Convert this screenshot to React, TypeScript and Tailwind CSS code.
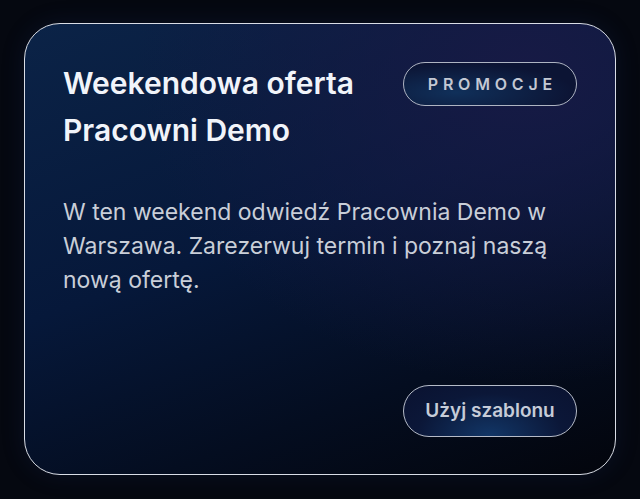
export default function App() {
  return (
    <div
      className="flex min-h-screen w-full items-start bg-[#050810] px-6 pt-[23px]"
      style={{ fontFamily: 'Inter, "Noto Sans", sans-serif' }}
    >
      <div className="flex h-[452px] w-full flex-col rounded-[36px] border-[1.5px] border-[#d9dde6] bg-[radial-gradient(ellipse_at_85%_10%,#171a45_0%,transparent_55%),linear-gradient(160deg,#0b2347_0%,#06183a_45%,#040d20_75%,#03050c_100%)] px-[38px] pb-[37px] pt-[36px] shadow-[0_0_24px_rgba(40,70,140,0.15)]">
        <div className="flex items-start justify-between gap-6">
          <h1 className="text-[30px] font-semibold leading-[47px] text-[#f1f4fa]">
            Weekendowa oferta
            <br />
            Pracowni Demo
          </h1>
          <span className="mt-[2px] flex h-[44px] w-[174px] shrink-0 items-center justify-center rounded-full border-[1.5px] border-[#aeb4c2] bg-[radial-gradient(ellipse_at_30%_70%,#10305a_0%,#0c1434_70%)] pl-[0.3em] text-[16px] font-semibold tracking-[0.3em] text-[#c3c8d3]">
            PROMOCJE
          </span>
        </div>
        <p className="mt-[41px] text-[23px] leading-[34px] text-[#c9ced8]">
          W ten weekend odwiedź Pracownia Demo w Warszawa. Zarezerwuj termin i poznaj naszą nową ofertę.
        </p>
        <div className="mt-auto flex justify-end">
          <button className="flex h-[52px] w-[174px] items-center justify-center rounded-full border-[1.5px] border-[#b5bbc8] bg-[radial-gradient(ellipse_at_50%_100%,#123666_0%,#0b1738_60%,#0a1230_100%)] text-[19px] font-semibold text-[#c6ccd8]">
            Użyj szablonu
          </button>
        </div>
      </div>
    </div>
  );
}
